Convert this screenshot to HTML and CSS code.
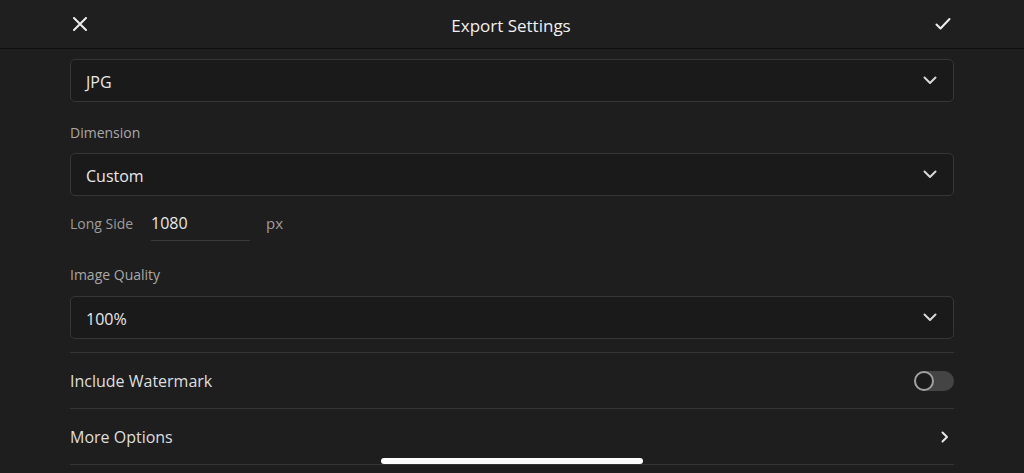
FILE: index.html
```html
<!DOCTYPE html>
<html>
<head>
<meta charset="utf-8">
<link rel="stylesheet" href="styles.css">
</head>
<body>
<div class="screen">
  <header class="topbar">
    <svg class="icon-x" width="14" height="14" viewBox="0 0 14 14"><path d="M1 1 L13 13 M13 1 L1 13" stroke="#ededed" stroke-width="2" stroke-linecap="round"/></svg>
    <div class="title">Export Settings</div>
    <svg class="icon-check" width="16" height="14" viewBox="0 0 16 14"><path d="M1.5 7.5 L5.5 11.5 L14.5 2" stroke="#ededed" stroke-width="2" fill="none" stroke-linecap="round" stroke-linejoin="round"/></svg>
  </header>
  <main class="content">
    <div class="select"><span>JPG</span><svg class="chev" width="14" height="9" viewBox="0 0 14 9"><path d="M1.5 1.5 L7 7 L12.5 1.5" stroke="#d8d8d8" stroke-width="2" fill="none" stroke-linecap="round" stroke-linejoin="round"/></svg></div>
    <div class="label">Dimension</div>
    <div class="select"><span>Custom</span><svg class="chev" width="14" height="9" viewBox="0 0 14 9"><path d="M1.5 1.5 L7 7 L12.5 1.5" stroke="#d8d8d8" stroke-width="2" fill="none" stroke-linecap="round" stroke-linejoin="round"/></svg></div>
    <div class="longside">
      <span class="ls-label">Long Side</span>
      <span class="ls-input">1080</span>
      <span class="ls-unit">px</span>
    </div>
    <div class="label label-q">Image Quality</div>
    <div class="select"><span>100%</span><svg class="chev" width="14" height="9" viewBox="0 0 14 9"><path d="M1.5 1.5 L7 7 L12.5 1.5" stroke="#d8d8d8" stroke-width="2" fill="none" stroke-linecap="round" stroke-linejoin="round"/></svg></div>
    <div class="row row-first">
      <span>Include Watermark</span>
      <div class="toggle"><div class="knob"></div></div>
    </div>
    <div class="row">
      <span>More Options</span>
      <svg width="8" height="12" viewBox="0 0 8 12"><path d="M1.5 1.5 L6 6 L1.5 10.5" stroke="#e6e6e6" stroke-width="2" fill="none" stroke-linecap="round" stroke-linejoin="round"/></svg>
    </div>
  </main>
  <div class="home-indicator"></div>
</div>
</body>
</html>
```
FILE: styles.css
```css
* { box-sizing: border-box; }
html, body { margin: 0; padding: 0; }
body {
  background: #1e1e1e;
  font-family: "Open Sans", "Noto Sans", sans-serif;
  color: #e6e6e6;
  width: 1024px;
  height: 473px;
  overflow: hidden;
}
.screen {
  position: relative;
  width: 1024px;
  height: 473px;
  background: #1e1e1e;
}
.topbar {
  height: 49px;
  display: flex;
  align-items: center;
  justify-content: space-between;
  padding: 0 73px 0 73px;
  border-bottom: 1px solid #0f0f0f;
  background: #1f1f1f;
}
.topbar .title {
  font-size: 17px;
  color: #f0f0f0;
  font-weight: 500;
  padding-top: 2px;
}
.content {
  padding: 10px 70px 0 70px;
}
.select {
  height: 43px;
  border: 1px solid #363636;
  border-radius: 5px;
  background: #1a1a1a;
  display: flex;
  align-items: center;
  justify-content: space-between;
  padding: 0 16px 0 15px;
  font-size: 16px;
  color: #e8e8e8;
}
.select span { padding-top: 3px; }
.label {
  font-size: 14px;
  color: #a8a8a8;
  height: 51px;
  display: flex;
  align-items: center;
  padding-top: 9px;
}
.label-q { height: 43px; padding-top: 0; }
.longside {
  height: 57px;
  display: flex;
  align-items: flex-start;
  padding-top: 16px;
  font-size: 14px;
}
.ls-label { color: #9c9c9c; width: 81px; padding-top: 2px; }
.ls-input {
  width: 99px;
  color: #e8e8e8;
  font-size: 16px;
  line-height: 22px;
  border-bottom: 1px solid #3a3a3a;
  padding-bottom: 6px;
}
.ls-unit { color: #9c9c9c; margin-left: 16px; font-size: 15px; padding-top: 1px; }
.row {
  height: 56px;
  border-bottom: 1px solid #353535;
  display: flex;
  align-items: center;
  justify-content: space-between;
  font-size: 16px;
  color: #dedede;
}
.row-first { border-top: 1px solid #353535; margin-top: 13px; height: 57px; }
.row svg { margin-right: 5px; }
.toggle {
  width: 40px;
  height: 20px;
  border-radius: 10px;
  background: #444;
  position: relative;
}
.knob {
  position: absolute;
  left: 0;
  top: 0;
  width: 20px;
  height: 20px;
  border-radius: 50%;
  border: 2px solid #a0a0a0;
  background: #1b1b1b;
}
.home-indicator {
  position: absolute;
  left: 381px;
  top: 458px;
  width: 262px;
  height: 6px;
  border-radius: 3px;
  background: #ffffff;
}
```
